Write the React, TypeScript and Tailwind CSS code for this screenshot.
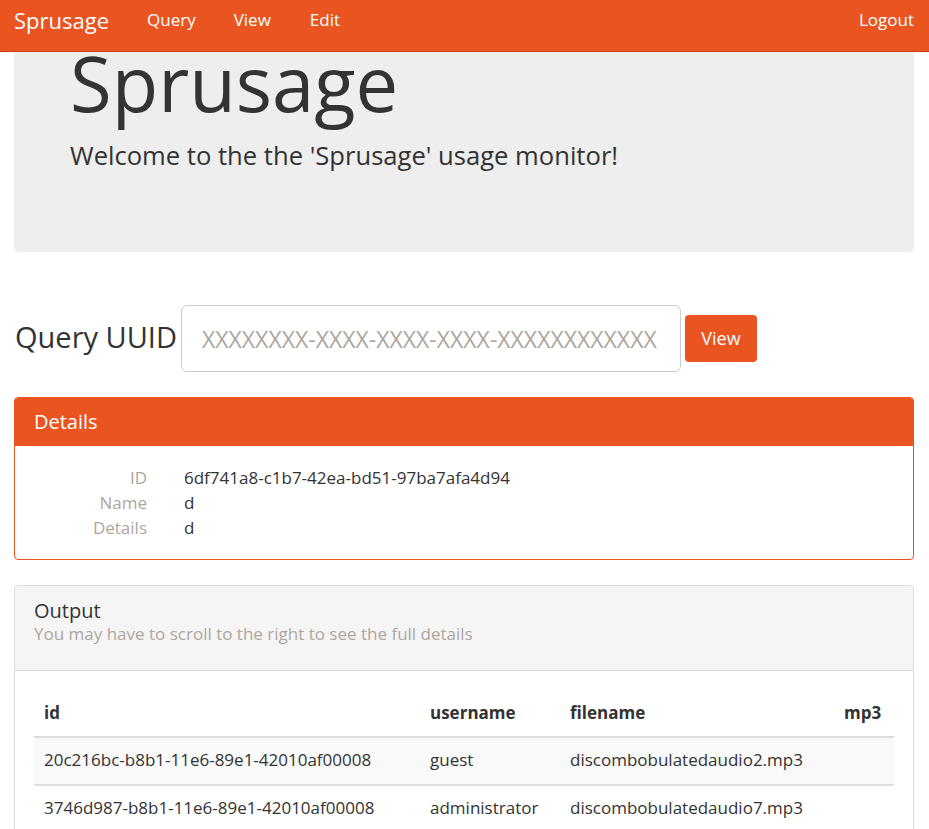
import React from "react";

const rows = [
  { id: "20c216bc-b8b1-11e6-89e1-42010af00008", username: "guest", filename: "discombobulatedaudio2.mp3", mp3: "" },
  { id: "3746d987-b8b1-11e6-89e1-42010af00008", username: "administrator", filename: "discombobulatedaudio7.mp3", mp3: "" },
];

function Navbar() {
  return (
    <nav className="h-[52px] bg-[#e95420] border-b border-[#c34113] flex items-start text-white">
      <a className="pl-[14px] pr-[15px] pt-[6px] text-[22px] leading-[28px]">Sprusage</a>
      <ul className="flex ml-[23px] pt-[9px] text-[17px] leading-[22px]">
        <li className="mr-[38px]">Query</li>
        <li className="mr-[39px]">View</li>
        <li>Edit</li>
      </ul>
      <a className="ml-auto pr-[15px] pt-[9px] text-[17px] leading-[22px]">Logout</a>
    </nav>
  );
}

export default function App() {
  return (
    <div className="min-h-screen bg-white text-[#333333] font-['Open_Sans',sans-serif]">
      <Navbar />
      <div className="pl-[14px] pr-[15px]">
        <div className="h-[200px] bg-[#eeeeee] rounded-b-[6px] pl-[56px]">
          <h1 className="text-[76px] leading-[60px] font-normal pt-[1px]">Sprusage</h1>
          <p className="mt-[28px] text-[25.6px] leading-[30px]">Welcome to the the 'Sprusage' usage monitor!</p>
        </div>

        <div className="flex items-start mt-[53px]">
          <label className="mt-[14px] text-[29px] leading-[36px] pl-[1px]">Query UUID</label>
          <input
            type="text"
            placeholder="XXXXXXXX-XXXX-XXXX-XXXX-XXXXXXXXXXXX"
            className="ml-[4px] w-[500px] h-[67px] rounded-[6px] border border-[#cccccc] px-[20px] text-[23px] outline-none placeholder:text-[#aea79f]"
          />
          <button className="ml-[4px] mt-[10px] h-[47px] w-[72px] rounded-[4px] bg-[#e95420] text-white text-[18px]">View</button>
        </div>

        <div className="mt-[25px] border border-[#e95420] rounded-[4px] overflow-hidden">
          <div className="h-[48px] bg-[#e95420] text-white px-[19px] flex items-center text-[20px]">Details</div>
          <dl className="pt-[19px] pb-[19px] text-[17px] leading-[25px]">
            {[
              ["ID", "6df741a8-c1b7-42ea-bd51-97ba7afa4d94"],
              ["Name", "d"],
              ["Details", "d"],
            ].map(([k, v]) => (
              <div key={k} className="flex">
                <dt className="w-[132px] text-right text-[#aea79f]">{k}</dt>
                <dd className="ml-[37px]">{v}</dd>
              </div>
            ))}
          </dl>
        </div>

        <div className="mt-[25px] border border-[#dddddd] rounded-[4px] overflow-hidden">
          <div className="h-[85px] bg-[#f5f5f5] border-b border-[#dddddd] px-[19px] pt-[12px]">
            <h3 className="text-[20px] leading-[25px]">Output</h3>
            <p className="text-[17px] leading-[22px] text-[#aea79f]">You may have to scroll to the right to see the full details</p>
          </div>
          <div className="p-[19px]">
            <table className="w-full table-fixed text-[17px] leading-[22px]">
              <colgroup>
                <col className="w-[386px]" />
                <col className="w-[140px]" />
                <col className="w-[274px]" />
                <col className="w-[60px]" />
              </colgroup>
              <thead>
                <tr className="border-b-2 border-[#dddddd] text-left">
                  <th className="px-[10px] py-[12px] font-bold">id</th>
                  <th className="px-[10px] py-[12px] font-bold">username</th>
                  <th className="px-[10px] py-[12px] font-bold">filename</th>
                  <th className="px-[10px] py-[12px] font-bold">mp3</th>
                </tr>
              </thead>
              <tbody>
                {rows.map((r, i) => (
                  <tr key={r.id} className={`border-t-2 border-[#dddddd] ${i % 2 === 0 ? "bg-[#f9f9f9]" : ""}`}>
                    <td className="px-[10px] pt-[11px] pb-[13px]">{r.id}</td>
                    <td className="px-[10px] pt-[11px] pb-[13px]">{r.username}</td>
                    <td className="px-[10px] pt-[11px] pb-[13px]">{r.filename}</td>
                    <td className="px-[10px] pt-[11px] pb-[13px]">{r.mp3}</td>
                  </tr>
                ))}
              </tbody>
            </table>
          </div>
        </div>
      </div>
    </div>
  );
}
